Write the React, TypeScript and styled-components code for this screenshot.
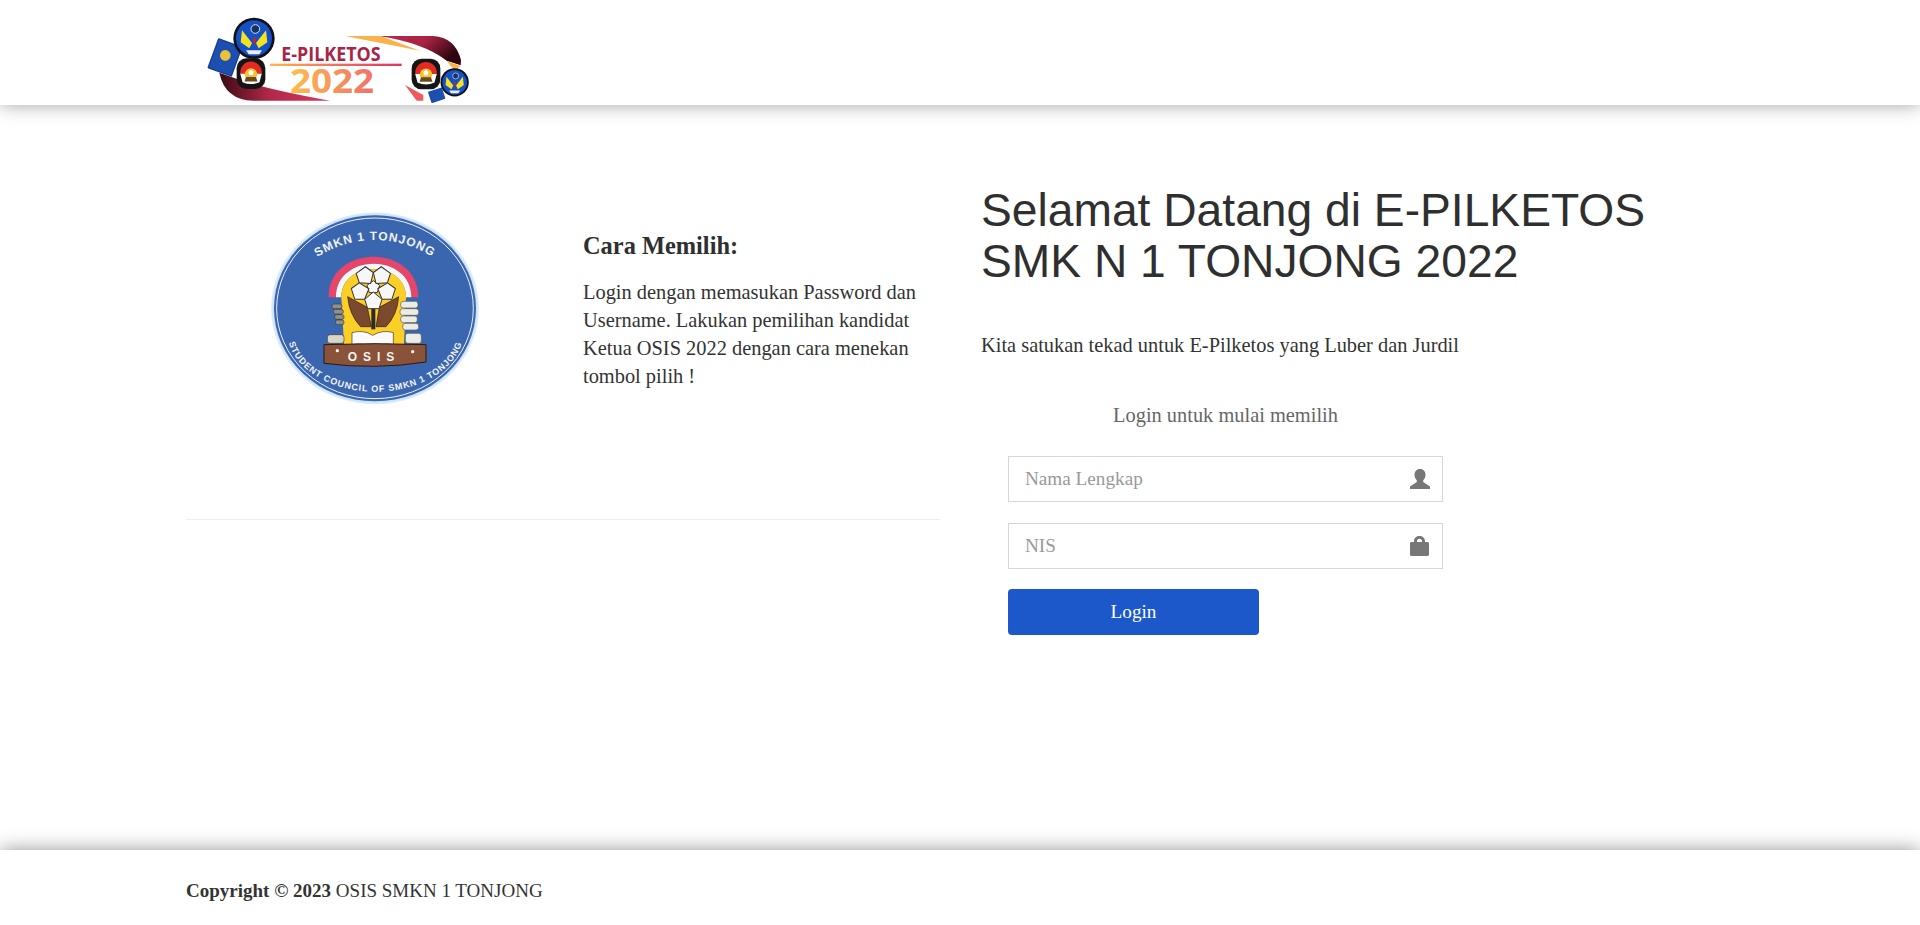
import React from 'react';
import styled, { createGlobalStyle } from 'styled-components';

const GlobalStyle = createGlobalStyle`
    html, body {
        margin: 0;
        padding: 0;
        background: #fff;
        font-family: "Liberation Serif", "Times New Roman", serif;
        color: #333;
    }
    * {
        box-sizing: border-box;
    }
`;

const Page = styled.div`
    min-height: 925px;
    display: flex;
    flex-direction: column;
`;

const Header = styled.header`
    height: 105px;
    padding-left: 190px;
    background: #fff;
    box-shadow: 0 0 18px rgba(0, 0, 0, 0.36);
    position: relative;
    z-index: 2;
`;

const Main = styled.main`
    flex: 1;
    display: flex;
    padding: 0 186px;
`;

const LeftColumn = styled.section`
    width: 754px;
`;

const IntroRow = styled.div`
    display: flex;
    height: 415px;
    border-bottom: 1px solid #eee;
    padding-top: 95px;
`;

const BadgeCell = styled.div`
    width: 397px;
    padding-left: 64px;
`;

const HowTo = styled.div`
    width: 345px;
    padding-top: 28px;
`;

const HowToTitle = styled.h3`
    margin: 0 0 14px;
    font-size: 24.4px;
    line-height: 36px;
    font-weight: 700;
    color: #2f2f2f;
`;

const HowToText = styled.p`
    margin: 0;
    font-size: 20.4px;
    line-height: 28px;
    color: #333;
`;

const RightColumn = styled.section`
    margin-left: 41px;
    padding-top: 80px;
    flex: 1;
`;

const Title = styled.h1`
    margin: 0;
    font-family: "Liberation Sans", Arial, sans-serif;
    font-size: 46.2px;
    line-height: 51px;
    font-weight: 400;
    color: #2f2f2f;
`;

const Tagline = styled.p`
    margin: 44px 0 0;
    font-size: 20.4px;
    line-height: 28px;
    color: #333;
`;

const LoginBox = styled.form`
    width: 435px;
    margin: 42px 0 0 27px;
`;

const LoginCaption = styled.p`
    margin: 0 0 27px;
    text-align: center;
    font-size: 20.4px;
    line-height: 28px;
    color: #666;
`;

const Field = styled.div`
    position: relative;
    margin-bottom: 21px;
`;

const Input = styled.input`
    display: block;
    width: 100%;
    height: 46px;
    padding: 0 16px;
    border: 1px solid #d2d6de;
    background: #fff;
    font-family: inherit;
    font-size: 19.2px;
    outline: none;

    &::placeholder {
        color: #999;
        opacity: 1;
    }
`;

const FieldIcon = styled.svg`
    position: absolute;
    right: 12px;
    top: 13px;
    width: 22px;
    height: 20px;
    fill: #777;
`;

const LoginButton = styled.button`
    display: block;
    width: 251px;
    height: 46px;
    margin-top: -1px;
    border: 0;
    border-radius: 4px;
    background: #1c58c9;
    color: #fff;
    font-family: inherit;
    font-size: 19.2px;
`;

const Footer = styled.footer`
    height: 75px;
    padding: 29px 186px 0;
    background: #fff;
    box-shadow: 0 0 18px rgba(0, 0, 0, 0.42);
    font-size: 19px;
    line-height: 24px;
    color: #333;
    position: relative;
`;

const KpuBadge = ({ x, y, r }: { x: number; y: number; r: number }) => (
    <g transform={`translate(${x} ${y}) scale(${r / 45})`}>
        <rect x="-44" y="-47" width="88" height="94" rx="30" fill="#151515" />
        <path d="M-33 -4 A33 33 0 0 1 33 -4 L33 2 H-33 Z" fill="#e22b24" />
        <path d="M-33 0 H33 L26 26 Q0 38 -26 26 Z" fill="#fff" />
        <circle cx="0" cy="2" r="19" fill="#f0c52e" />
        <path d="M-15 10 H15 L20 24 H-20 Z" fill="#6a4a22" />
        <path d="M-8 -6 L0 -13 L8 -6 L6 4 H-6 Z" fill="#fff" />
    </g>
);

const BlueSeal = ({ x, y, r }: { x: number; y: number; r: number }) => (
    <g transform={`translate(${x} ${y}) scale(${r / 60})`}>
        <circle r="62" fill="#111" />
        <circle r="54" fill="#1450c8" />
        <path d="M-36 -24 L-6 14 L-14 30 L-40 12 Z" fill="#f4e11f" />
        <path d="M36 -24 L6 14 L14 30 L40 12 Z" fill="#f4e11f" />
        <circle cx="4" cy="-28" r="13" fill="#16305f" stroke="#ddd" strokeWidth="3" />
        <path d="M-4 4 Q0 -10 6 4 L2 24 Z" fill="#c8242c" />
        <path d="M-24 36 L24 36 L16 48 L-16 48 Z" fill="#eef" />
    </g>
);

const HeaderLogo = () => (
    <svg width="300" height="105" viewBox="0 0 900 315">
        <defs>
            <linearGradient id="bandTop" x1="0" y1="0" x2="1" y2="0.4">
                <stop offset="0" stopColor="#b72a4c" />
                <stop offset="0.55" stopColor="#a82344" />
                <stop offset="1" stopColor="#2e060f" />
            </linearGradient>
            <linearGradient id="bandBottom" x1="0" y1="0" x2="1" y2="0">
                <stop offset="0" stopColor="#3a0a14" />
                <stop offset="0.45" stopColor="#b12848" />
                <stop offset="1" stopColor="#d9395f" />
            </linearGradient>
            <linearGradient id="rule" x1="0" y1="0" x2="1" y2="0">
                <stop offset="0" stopColor="#fbb84f" />
                <stop offset="0.4" stopColor="#f47b5c" />
                <stop offset="1" stopColor="#de3560" />
            </linearGradient>
            <linearGradient id="year" x1="0" y1="0" x2="1" y2="0">
                <stop offset="0" stopColor="#fdbe4e" />
                <stop offset="1" stopColor="#f0716a" />
            </linearGradient>
        </defs>
        <path d="M565 108 H730 Q795 112 813 180 L812 196 L770 182 Q700 128 565 108 Z" fill="url(#bandTop)" />
        <path d="M465 108 H572 L690 152 Z" fill="#fbb24a" />
        <path d="M770 184 L812 198 L795 212 Z" fill="#f9b24a" />
        <path d="M88 218 L150 240 Q240 270 420 302 H190 Q105 300 88 218 Z" fill="url(#bandBottom)" />
        <path d="M645 255 L700 285 V302 H680 Z" fill="#ef5a5f" />
        <text x="274" y="184" fontFamily="'Open Sans', sans-serif" fontWeight="700" fontSize="60" fill="#a8254a" textLength="298" lengthAdjust="spacingAndGlyphs">E-PILKETOS</text>
        <rect x="240" y="191" width="395" height="7" fill="url(#rule)" />
        <text x="300" y="278" fontFamily="'Open Sans', sans-serif" fontWeight="700" fontSize="104" fill="url(#year)" textLength="252" lengthAdjust="spacingAndGlyphs">2022</text>
        <g transform="rotate(20 104 172)">
            <rect x="66" y="124" width="78" height="96" rx="3" fill="#16418f" />
            <rect x="70" y="128" width="70" height="88" fill="#1d4fb0" />
            <circle cx="104" cy="166" r="16" fill="#e9c23a" />
        </g>
        <BlueSeal x={192} y={115} r={60} />
        <KpuBadge x={183} y={221} r={44} />
        <KpuBadge x={708} y={222} r={44} />
        <rect x="718" y="268" width="44" height="36" rx="3" fill="#1d4fb0" transform="rotate(-18 740 286)" />
        <BlueSeal x={794} y={247} r={41} />
    </svg>
);

const OSIS_PETALS = [-36, 36, 108, 180, 252];

const OsisBadge = () => (
    <svg width="250" height="220" viewBox="0 0 750 660">
        <defs>
            <path id="arcTop" d="M190 180 A315 315 0 0 1 560 180" />
            <path id="arcBottom" d="M112 395 A264 180 0 0 0 640 395" />
            <radialGradient id="halo" cx="0.5" cy="0.5" r="0.5">
                <stop offset="0.93" stopColor="#9cc8ee" />
                <stop offset="1" stopColor="#e4f1fb" />
            </radialGradient>
        </defs>
        <ellipse cx="375" cy="325" rx="312" ry="288" fill="url(#halo)" />
        <ellipse cx="375" cy="325" rx="303" ry="279" fill="#3a66b0" />
        <ellipse cx="375" cy="325" rx="295" ry="271" fill="none" stroke="#e8eef8" strokeWidth="3" />
        <text fontFamily="'Liberation Sans', sans-serif" fontWeight="700" fontSize="36" letterSpacing="3" fill="#f2f2f2">
            <textPath href="#arcTop" startOffset="50%" textAnchor="middle">SMKN 1 TONJONG</textPath>
        </text>
        <text fontFamily="'Liberation Sans', sans-serif" fontWeight="700" fontSize="27" letterSpacing="2.500" fill="#f2f2f2">
            <textPath href="#arcBottom" startOffset="50%" textAnchor="middle">STUDENT COUNCIL OF SMKN 1 TONJONG</textPath>
        </text>
        <path d="M236 292 C236 130 505 130 505 292 H484 C484 158 258 158 258 292 Z" fill="#e8456a" />
        <path d="M258 292 C258 158 484 158 484 292 H468 C468 180 274 180 274 292 Z" fill="#f6f6f2" />
        <path d="M274 292 C274 180 468 180 468 292 L462 432 H282 Z" fill="#fbcf26" />
        <path d="M293 290 L352 322 L364 380 L332 380 Q298 345 293 290 Z" fill="#7b4a2e" stroke="#2b1a10" strokeWidth="2" />
        <path d="M446 290 L388 322 L378 380 L408 380 Q442 345 446 290 Z" fill="#7b4a2e" stroke="#2b1a10" strokeWidth="2" />
        <rect x="364" y="322" width="12" height="66" fill="#2b2b2b" />
        <g transform="translate(370 262)" fill="#f7f7f7" stroke="#333" strokeWidth="3">
            <path d="M0 -20 L19 -6 L12 16 L-12 16 L-19 -6 Z" />
            {OSIS_PETALS.map((angle) => (
                <path key={angle} transform={`rotate(${angle})`} d="M0 -14 L-26 -36 L-17 -64 L17 -64 L26 -36 Z" />
            ))}
        </g>
        <path d="M306 398 Q340 388 368 406 Q398 388 430 398 V434 Q396 426 368 446 Q338 426 306 434 Z" fill="#fafafa" stroke="#333" strokeWidth="2" />
        <g fill="#8f918c" stroke="#3a3a3a" strokeWidth="2">
            <rect x="246" y="312" width="30" height="14" rx="6" />
            <rect x="250" y="328" width="30" height="14" rx="6" />
            <rect x="254" y="344" width="28" height="14" rx="6" />
            <rect x="256" y="360" width="26" height="14" rx="6" />
            <rect x="232" y="404" width="50" height="26" rx="8" fill="#d9d6c8" />
        </g>
        <g fill="#ecebe4" stroke="#555" strokeWidth="2">
            <rect x="452" y="304" width="52" height="20" rx="8" />
            <rect x="450" y="326" width="56" height="20" rx="8" />
            <rect x="452" y="348" width="50" height="20" rx="8" />
            <rect x="458" y="370" width="48" height="20" rx="8" />
            <rect x="466" y="400" width="48" height="30" rx="8" />
        </g>
        <path d="M222 434 Q375 428 528 434 V486 Q375 510 222 490 Z" fill="#8a5238" stroke="#2b1a10" strokeWidth="3" />
        <text x="372" y="482" textAnchor="middle" fontFamily="'Liberation Sans', sans-serif" fontWeight="700" fontSize="36" letterSpacing="18" fill="#f4f4f4">OSIS</text>
        <circle cx="262" cy="452" r="5" fill="#f4f4f4" />
        <circle cx="488" cy="455" r="5" fill="#f4f4f4" />
    </svg>
);

export default function App() {
    return (
        <Page>
            <GlobalStyle />
            <Header>
                <HeaderLogo />
            </Header>
            <Main>
                <LeftColumn>
                    <IntroRow>
                        <BadgeCell>
                            <OsisBadge />
                        </BadgeCell>
                        <HowTo>
                            <HowToTitle>Cara Memilih:</HowToTitle>
                            <HowToText>
                                Login dengan memasukan Password dan Username. Lakukan pemilihan kandidat Ketua OSIS 2022 dengan cara menekan tombol pilih !
                            </HowToText>
                        </HowTo>
                    </IntroRow>
                </LeftColumn>
                <RightColumn>
                    <Title>
                        Selamat Datang di E-PILKETOS
                        <br />
                        SMK N 1 TONJONG 2022
                    </Title>
                    <Tagline>Kita satukan tekad untuk E-Pilketos yang Luber dan Jurdil</Tagline>
                    <LoginBox>
                        <LoginCaption>Login untuk mulai memilih</LoginCaption>
                        <Field>
                            <Input type="text" placeholder="Nama Lengkap" />
                            <FieldIcon viewBox="0 0 22 20">
                                <path d="M11 0C7.500 0 5.500 2.500 5.500 6c0 2.200 1 4.200 2.300 5.300V13L1 17.500V20H21V17.500L14.200 13v-1.700C15.500 10.200 16.500 8.200 16.500 6 16.500 2.500 14.500 0 11 0Z" />
                            </FieldIcon>
                        </Field>
                        <Field>
                            <Input type="password" placeholder="NIS" />
                            <FieldIcon viewBox="0 0 22 20">
                                <path fillRule="evenodd" d="M2.500 6H5V5c0-3 2.500-5 5.500-5S16 2 16 5v1h2.500C19.400 6 20 6.600 20 7.500v11c0 .9-.6 1.500-1.500 1.500h-16C1.600 20 1 19.400 1 18.500v-11C1 6.600 1.600 6 2.500 6ZM8 6h5V5c0-1.300-1-2.300-2.500-2.300S8 3.700 8 5v1Z" />
                            </FieldIcon>
                        </Field>
                        <LoginButton type="button">Login</LoginButton>
                    </LoginBox>
                </RightColumn>
            </Main>
            <Footer>
                <strong>Copyright © 2023</strong> OSIS SMKN 1 TONJONG
            </Footer>
        </Page>
    );
}
